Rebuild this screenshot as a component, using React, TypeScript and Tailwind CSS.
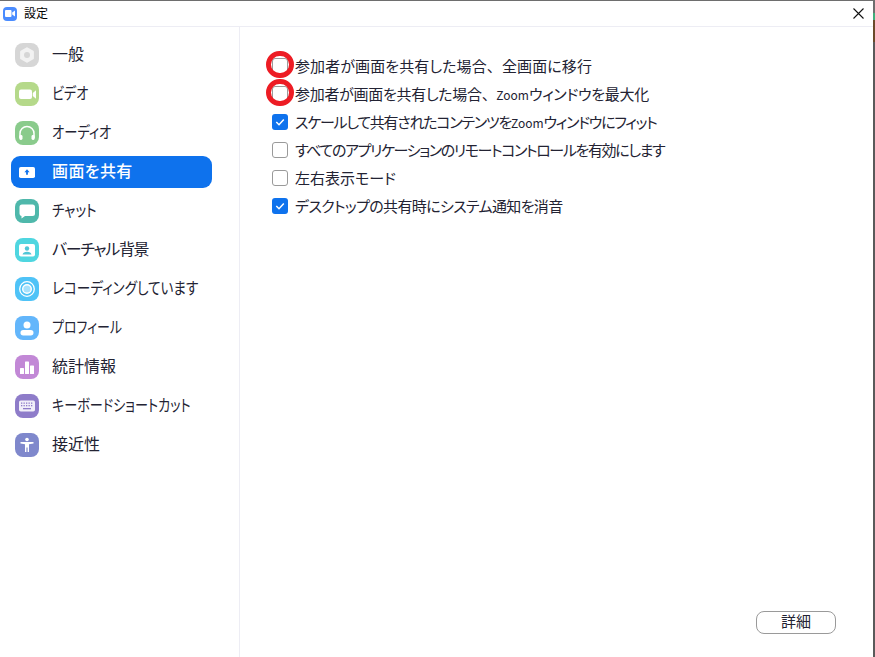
import React from 'react';

const font = "font-['Noto_Sans_CJK_JP','Noto_Sans',sans-serif] [font-feature-settings:'palt']";

function Tile({ bg, children }: { bg: string; children: React.ReactNode }) {
  return (
    <div className={`w-[24px] h-[24px] rounded-[8px] flex items-center justify-center shrink-0 ${bg}`}>
      <svg width="24" height="24" viewBox="0 0 24 24">{children}</svg>
    </div>
  );
}

const items: { label: string; bg: string; icon: React.ReactNode; active?: boolean; text?: string }[] = [
  {
    label: '一般',
    bg: 'bg-[#d6d6d6]',
    icon: (
      <>
        <path d="M12 5.500l5.600 3.250v6.500L12 18.500l-5.600-3.250v-6.500z" fill="#f2f2f2" stroke="#f2f2f2" strokeWidth="2.600" strokeLinejoin="round" />
        <circle cx="12" cy="12" r="3" fill="#d6d6d6" />
      </>
    ),
  },
  {
    label: 'ビデオ',
    bg: 'bg-[#b5d98a]',
    text: 'origin-left scale-x-[0.82]',
    icon: (
      <>
        <rect x="4" y="7.500" width="13" height="9.500" rx="2" fill="#fff" />
        <path fill="#fff" d="M17.800 11l3.200-2.800v8.600l-3.200-2.800z" />
      </>
    ),
  },
  {
    label: 'オーディオ',
    bg: 'bg-[#8acb8c]',
    text: 'origin-left scale-x-[0.83]',
    icon: (
      <>
        <path fill="none" stroke="#fff" strokeWidth="1.500" d="M5 17v-4.500a7 7 0 0114 0V17" />
        <rect x="4.300" y="14" width="3.200" height="5" rx="1.400" fill="#fff" />
        <rect x="16.500" y="14" width="3.200" height="5" rx="1.400" fill="#fff" />
      </>
    ),
  },
  {
    label: '画面を共有',
    bg: 'bg-transparent',
    active: true,
    text: 'tracking-[0.4px]',
    icon: (
      <>
        <rect x="4" y="7" width="16" height="11" rx="1.800" fill="#fff" />
        <path fill="#0e72ed" d="M12 9.300l2.600 2.900h-1.700v2.500h-1.800v-2.500H9.400z" />
      </>
    ),
  },
  {
    label: 'チャット',
    bg: 'bg-[#4fb8ab]',
    text: 'origin-left scale-x-[0.85]',
    icon: (
      <path fill="#fff" d="M7 5.500h10.500A2.500 2.500 0 0120 8v6.500a2.500 2.500 0 01-2.500 2.500H10L6.500 19.500V17A2.500 2.500 0 014.500 14.500V8A2.500 2.500 0 017 5.500z" />
    ),
  },
  {
    label: 'バーチャル背景',
    bg: 'bg-[#4fd6e0]',
    text: 'tracking-[-1.300px]',
    icon: (
      <>
        <rect x="4" y="6" width="16" height="12.500" rx="2" fill="#fff" />
        <circle cx="12" cy="10.500" r="2.200" fill="#4fc6d6" />
        <path fill="#4fc6d6" d="M7.500 16.500c.5-2 2-2.800 4.500-2.800s4 .8 4.500 2.800z" />
      </>
    ),
  },
  {
    label: 'レコーディングしています',
    bg: 'bg-[#4fc3f7]',
    text: 'origin-left scale-x-[0.85]',
    icon: (
      <>
        <circle cx="12" cy="12" r="7.300" fill="none" stroke="#fff" strokeWidth="1.300" />
        <circle cx="12" cy="12" r="4.300" fill="#a8e1fb" stroke="#fff" strokeWidth="1.400" />
      </>
    ),
  },
  {
    label: 'プロフィール',
    bg: 'bg-[#63b6fb]',
    text: 'origin-left scale-x-[0.81]',
    icon: (
      <>
        <circle cx="12" cy="9" r="3.500" fill="#fff" />
        <rect x="5.500" y="14" width="13" height="5.500" rx="2.700" fill="#fff" />
      </>
    ),
  },
  {
    label: '統計情報',
    bg: 'bg-[#c288d6]',
    icon: (
      <>
        <rect x="5" y="13" width="4" height="6" rx=".6" fill="#fff" />
        <rect x="10" y="6.500" width="4" height="12.500" rx=".6" fill="#fff" />
        <rect x="15" y="10.500" width="4" height="8.500" rx=".6" fill="#fff" />
      </>
    ),
  },
  {
    label: 'キーボードショートカット',
    bg: 'bg-[#8e7cc9]',
    text: 'origin-left scale-x-[0.82]',
    icon: (
      <>
        <rect x="4" y="6.500" width="16" height="11" rx="1.800" fill="#f1eff9" />
        <g fill="#8e7cc9">
          <rect x="6" y="8.500" width="1.300" height="1.300" />
          <rect x="8.500" y="8.500" width="1.300" height="1.300" />
          <rect x="11" y="8.500" width="1.300" height="1.300" />
          <rect x="13.500" y="8.500" width="1.300" height="1.300" />
          <rect x="16" y="8.500" width="1.300" height="1.300" />
          <rect x="6" y="11" width="1.300" height="1.300" />
          <rect x="8.500" y="11" width="1.300" height="1.300" />
          <rect x="11" y="11" width="1.300" height="1.300" />
          <rect x="13.500" y="11" width="1.300" height="1.300" />
          <rect x="16" y="11" width="1.300" height="1.300" />
          <rect x="8" y="14" width="8" height="1.300" />
        </g>
      </>
    ),
  },
  {
    label: '接近性',
    bg: 'bg-[#7f88cc]',
    icon: (
      <>
        <circle cx="12" cy="6.500" r="1.800" fill="#fff" />
        <path fill="#fff" d="M5.500 9h13v1.600l-4.500.6V19h-1.400v-4.500h-1.200V19H10v-7.800l-4.500-.6z" />
      </>
    ),
  },
];

const Comma = () => <span className="[font-feature-settings:normal]">、</span>;
const Zoom = () => <span className="text-[12px] tracking-normal">Zoom</span>;

const options: { label: React.ReactNode; checked: boolean; ring?: boolean; text?: string }[] = [
  { label: <>参加者が画面を共有した場合<Comma />全画面に移行</>, checked: false, ring: true, text: 'tracking-[0.100px]' },
  { label: <>参加者が画面を共有した場合<Comma /><Zoom />ウィンドウを最大化</>, checked: false, ring: true, text: 'tracking-[-0.300px]' },
  { label: <>スケールして共有されたコンテンツを<Zoom />ウィンドウにフィット</>, checked: true, text: 'tracking-[-1.250px]' },
  { label: 'すべてのアプリケーションのリモートコントロールを有効にします', checked: false, text: 'tracking-[-1.380px]' },
  { label: '左右表示モード', checked: false },
  { label: 'デスクトップの共有時にシステム通知を消音', checked: true, text: 'tracking-[-0.650px]' },
];

function Check({ checked, ring }: { checked: boolean; ring?: boolean }) {
  return (
    <div className="relative w-[16px] h-[16px] shrink-0 mt-[2px]">
      {checked ? (
        <div className="w-[16px] h-[16px] rounded-[3px] bg-[#0e72ed] flex items-center justify-center">
          <svg width="12" height="12" viewBox="0 0 12 12">
            <path d="M2.300 6l2.700 2.700L9.800 3.500" fill="none" stroke="#fff" strokeWidth="1.500" />
          </svg>
        </div>
      ) : (
        <div className="w-[16px] h-[16px] rounded-[3px] border border-[#9a9a9a] bg-white" />
      )}
      {ring && (
        <div className="absolute left-[-6px] top-[-7px] w-[28px] h-[27px] rounded-full border-[5px] border-[#ed1c24]" />
      )}
    </div>
  );
}

export default function App() {
  return (
    <div className={`w-[875px] h-[657px] flex overflow-hidden text-[#232333] ${font}`}>
      <div className="w-[873px] h-[657px] bg-white flex flex-col border-t border-[#6e6e6e]">
        <div className="h-[26px] shrink-0 flex items-center border-b border-[#ededf4] pl-[3px] pr-[9px]">
          <div className="w-[14px] h-[14px] rounded-[4px] bg-[#4a8cff] flex items-center justify-center">
            <svg width="10" height="7" viewBox="0 0 10 7">
              <path fill="#fff" d="M0 1a1 1 0 011-1h4.500a1 1 0 011 1v5a1 1 0 01-1 1H1a1 1 0 01-1-1zM7.200 2.500L10 .5v6L7.200 4.500z" />
            </svg>
          </div>
          <span className="ml-[7px] mb-[2px] text-[12px] leading-none text-black">設定</span>
          <svg className="ml-auto" width="11" height="11" viewBox="0 0 11 11">
            <path d="M.5.5l10 10M10.500.5l-10 10" stroke="#111" strokeWidth="1.100" />
          </svg>
        </div>
        <div className="flex flex-1 min-h-0">
          <div className="w-[240px] shrink-0 border-r border-[#ededf4] pt-[12px] pl-[11px] flex flex-col gap-[7px]">
            {items.map((it) => (
              <div
                key={it.label}
                className={`w-[201px] h-[32px] flex items-center pl-[4px] gap-[13px] rounded-[9px] ${it.active ? 'bg-[#0e72ed] text-white font-medium' : ''}`}
              >
                <Tile bg={it.bg}>{it.icon}</Tile>
                <span className={`inline-block pb-[4px] text-[16px] leading-none whitespace-nowrap ${it.text ?? ''}`}>{it.label}</span>
              </div>
            ))}
          </div>
          <div className="flex-1 relative pl-[32px] pt-[28px] flex flex-col gap-[8px]">
            {options.map((o, i) => (
              <div key={i} className="h-[20px] flex items-center gap-[7px]">
                <Check checked={o.checked} ring={o.ring} />
                <span className={`text-[15px] leading-none whitespace-nowrap ${o.text ?? ''}`}>{o.label}</span>
              </div>
            ))}
            <button className="absolute right-[37px] bottom-[23px] w-[80px] h-[23px] rounded-[8px] border border-[#9a9a9a] bg-white text-[15px] leading-none pb-[5px] text-[#232333]">
              詳細
            </button>
          </div>
        </div>
      </div>
      <div className="w-[2px] h-[657px] flex flex-col bg-[#5a5a5a]">
        <div className="h-[13px] bg-[#6e6e6e]" />
        <div className="h-[7px] bg-[#3fae7a]" />
        <div className="h-[22px] bg-[#6b4a2a]" />
      </div>
    </div>
  );
}
